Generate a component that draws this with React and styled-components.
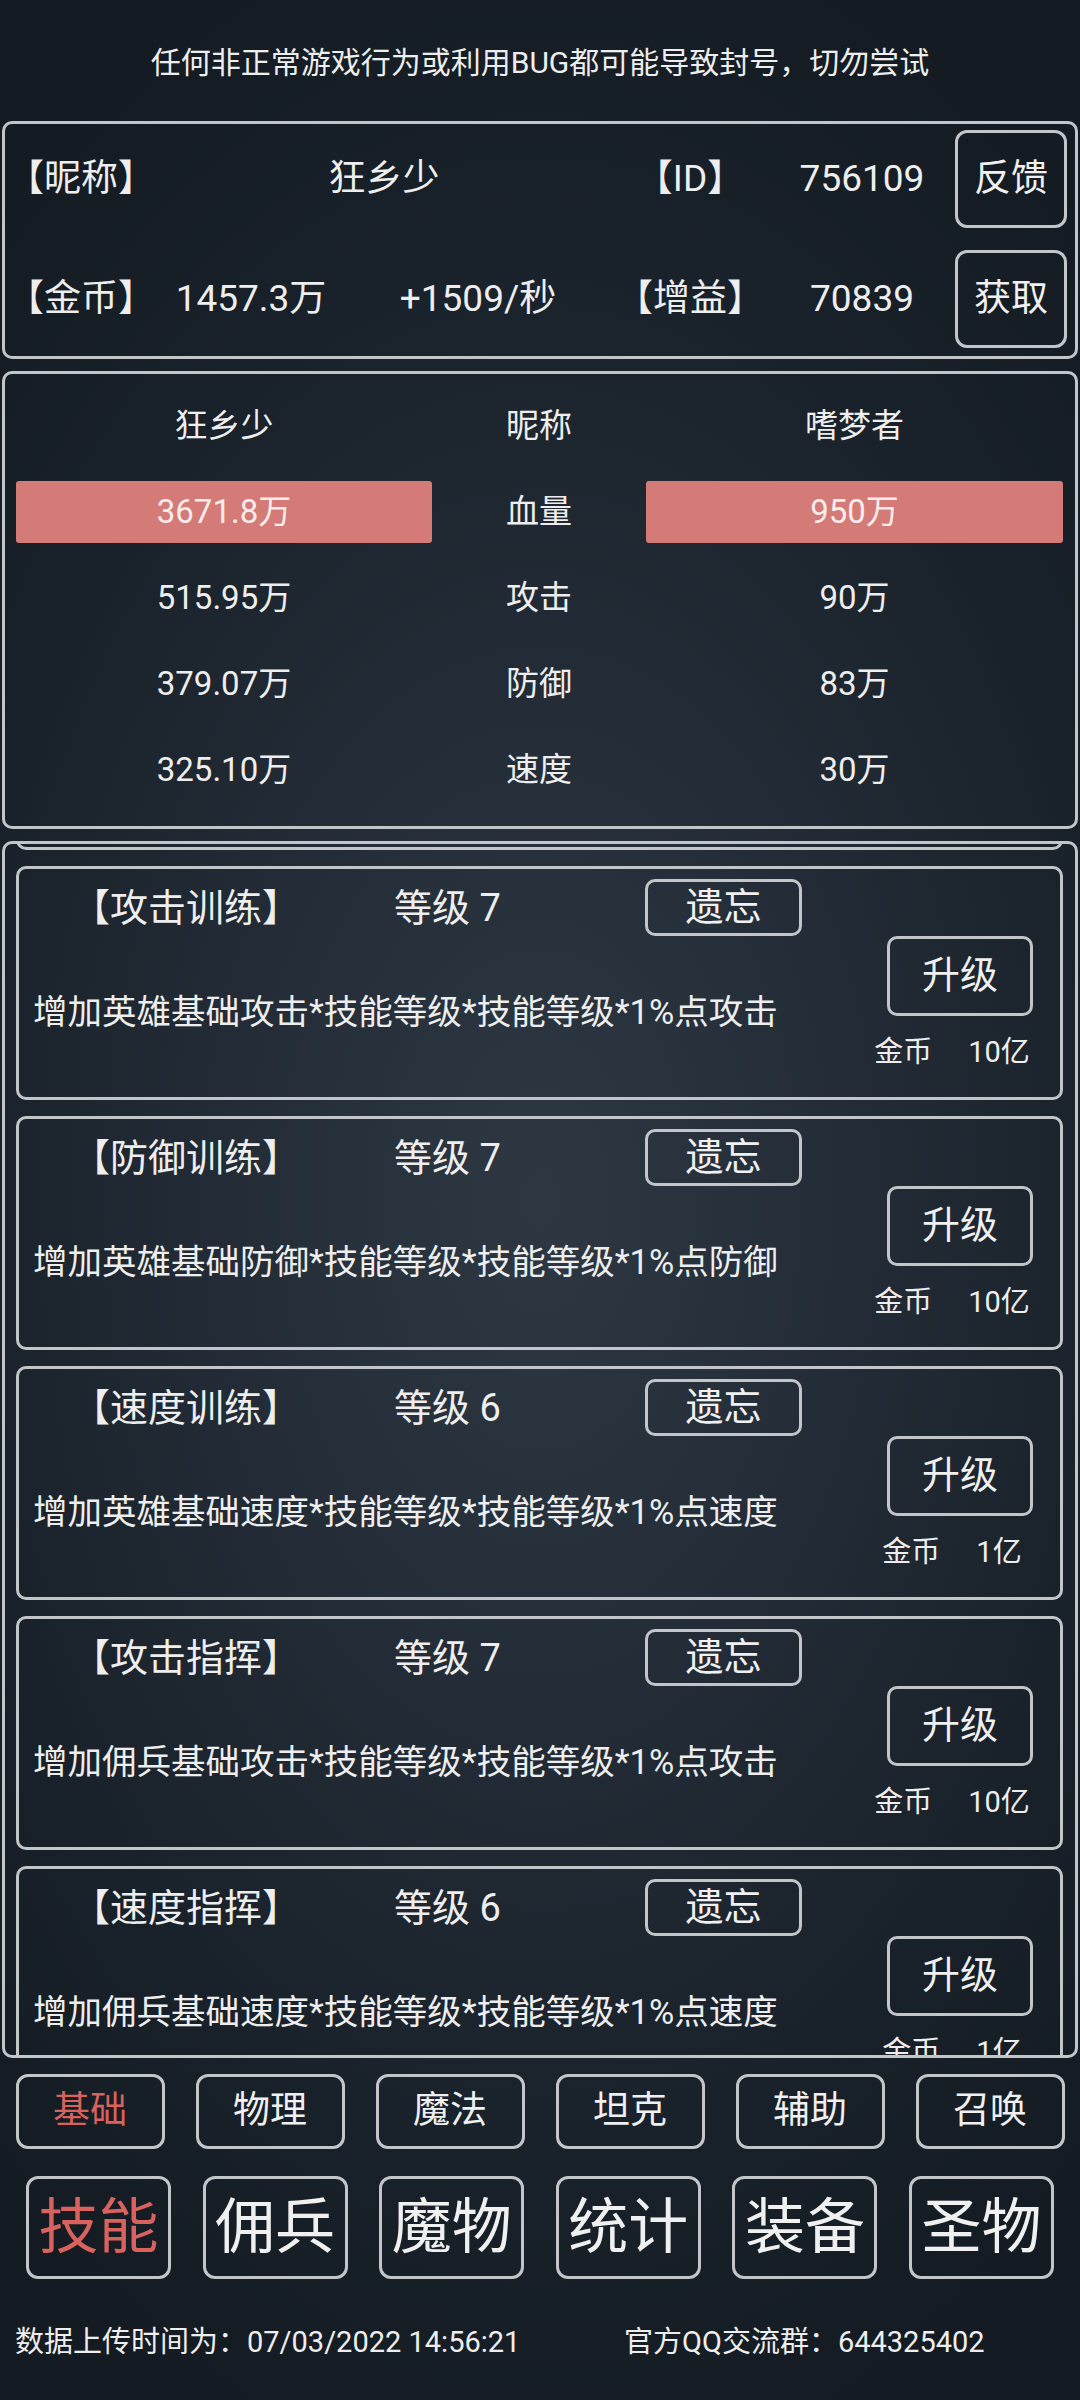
import React, { useLayoutEffect, useRef } from "react";
import styled, { createGlobalStyle } from "styled-components";

const GlobalStyle = createGlobalStyle`
  html, body {
    margin: 0;
    padding: 0;
  }
  body {
    width: 1080px;
    min-height: 2400px;
    background: radial-gradient(ellipse 75% 55% at 50% 50%, #2d3843 0%, #232c36 40%, #182029 75%, #141b22 100%);
    font-family: Roboto, "Noto Sans CJK SC", sans-serif;
    color: #eeeeee;
  }
  * {
    box-sizing: border-box;
  }
`;

const BORDER = "#c3c6c9";
const RED = "#d9625e";

const Page = styled.div`
  width: 1080px;
  height: 2400px;
  display: flex;
  flex-direction: column;
`;

const Notice = styled.div`
  height: 121px;
  display: flex;
  align-items: center;
  justify-content: center;
  font-size: 30px;
  padding-bottom: 2px;
`;

const Panel = styled.div`
  margin: ${(p) => p.$mt || 0}px 2px 0;
  border: 3px solid ${BORDER};
  border-radius: 10px;
`;

const InfoGrid = styled.div`
  display: grid;
  grid-template-columns: 152px 188px 266px 158px 186px 112px;
  row-gap: 22px;
  padding: 6px 6px 8px 0;
  font-size: 37px;
  line-height: 50px;
  align-items: center;
  justify-items: center;
`;

const Cell = styled.span`
  grid-column: ${(p) => p.$span || "auto"};
  white-space: nowrap;
`;

const BoxButton = styled.div`
  border: 3px solid ${BORDER};
  border-radius: ${(p) => p.$radius || 12}px;
  width: ${(p) => p.$w}px;
  height: ${(p) => p.$h}px;
  display: flex;
  align-items: center;
  justify-content: center;
  font-size: ${(p) => p.$size || 38}px;
  line-height: 1.2;
  color: ${(p) => (p.$active ? RED : "#f0f0f0")};
  white-space: nowrap;
  flex-shrink: 0;
`;

const StatsGrid = styled.div`
  display: grid;
  grid-template-columns: 416px 214px 417px;
  grid-auto-rows: 86px;
  padding: 9px 12px 13px 11px;
  font-size: 33px;
  line-height: 44px;
  align-items: center;
  justify-items: center;
`;

const StatCell = styled.div`
  width: 100%;
  height: 62px;
  display: flex;
  align-items: center;
  justify-content: center;
  border-radius: 3px;
  background: ${(p) => (p.$bar ? "#d47b78" : "transparent")};
  color: ${(p) => (p.$bar ? "#f7ecec" : "#eeeeee")};
`;

const Viewport = styled.div`
  height: 1211px;
  overflow-y: auto;
  scrollbar-width: none;
  padding: 0 12px 0 11px;
  &::-webkit-scrollbar {
    display: none;
  }
`;

const CardList = styled.div`
  display: flex;
  flex-direction: column;
  gap: 16px;
  padding-bottom: 16px;
`;

const Card = styled.div`
  height: 234px;
  flex-shrink: 0;
  border: 3px solid ${BORDER};
  border-radius: 10px;
  display: grid;
  grid-template-columns: 1fr 200px;
  grid-template-rows: 67px 1fr;
`;

const CardHead = styled.div`
  grid-column: 1 / 3;
  display: flex;
  align-items: center;
  padding: 10px 0 0 53px;
  font-size: 38px;
  line-height: 50px;
`;

const Title = styled.span`
  width: 322px;
  white-space: nowrap;
`;

const Level = styled.span`
  width: 251px;
  white-space: nowrap;
`;

const Desc = styled.div`
  padding: 54px 0 0 14px;
  font-size: 34.5px;
  line-height: 44px;
  white-space: nowrap;
`;

const Side = styled.div`
  display: flex;
  flex-direction: column;
  align-items: center;
`;

const Cost = styled.div`
  margin-top: 18px;
  line-height: 36px;
  font-size: 29px;
  display: flex;
  gap: 36px;
  padding-right: 16px;
  white-space: nowrap;
`;

const TabRow = styled.div`
  display: flex;
  justify-content: center;
  gap: ${(p) => p.$gap}px;
  margin-top: ${(p) => p.$mt}px;
`;

const Footer = styled.div`
  margin-top: 40px;
  height: 40px;
  display: flex;
  align-items: center;
  font-size: 29px;
  padding-left: 15px;
  white-space: nowrap;
`;

const FooterItem = styled.span`
  width: ${(p) => (p.$w ? p.$w + "px" : "auto")};
`;

// the first entry is scrolled out of view: only its bottom edge shows
const skills = [
  { name: "【攻击训练】", lv: 7, desc: "增加英雄基础攻击*技能等级*技能等级*1%点攻击", cost: "10亿" },
  { name: "【防御训练】", lv: 7, desc: "增加英雄基础防御*技能等级*技能等级*1%点防御", cost: "10亿" },
  { name: "【速度训练】", lv: 6, desc: "增加英雄基础速度*技能等级*技能等级*1%点速度", cost: "1亿" },
  { name: "【攻击指挥】", lv: 7, desc: "增加佣兵基础攻击*技能等级*技能等级*1%点攻击", cost: "10亿" },
  { name: "【速度指挥】", lv: 6, desc: "增加佣兵基础速度*技能等级*技能等级*1%点速度", cost: "1亿" },
];

const stats = [
  ["狂乡少", "昵称", "嗜梦者", false],
  ["3671.8万", "血量", "950万", true],
  ["515.95万", "攻击", "90万", false],
  ["379.07万", "防御", "83万", false],
  ["325.10万", "速度", "30万", false],
];

const smallTabs = ["基础", "物理", "魔法", "坦克", "辅助", "召唤"];
const bigTabs = ["技能", "佣兵", "魔物", "统计", "装备", "圣物"];

const SkillCard = ({ skill }) => (
	<Card>
		<CardHead>
			<Title>{skill.name}</Title>
			<Level>等级 {skill.lv}</Level>
			<BoxButton $w={157} $h={57} $radius={10}>遗忘</BoxButton>
		</CardHead>
		<Desc>{skill.desc}</Desc>
		<Side>
			<BoxButton $w={146} $h={80} $radius={10}>升级</BoxButton>
			<Cost>
				<span>金币</span>
				<span>{skill.cost}</span>
			</Cost>
		</Side>
	</Card>
);

const App = () => {
	const listRef = useRef(null);

	useLayoutEffect(() => {
		if (listRef.current) listRef.current.scrollTop = 228;
	}, []);

	return (
		<Page>
			<GlobalStyle />
			<Notice>任何非正常游戏行为或利用BUG都可能导致封号，切勿尝试</Notice>

			<Panel>
				<InfoGrid>
					<Cell>【昵称】</Cell>
					<Cell $span="2 / 4">狂乡少</Cell>
					<Cell>【ID】</Cell>
					<Cell>756109</Cell>
					<BoxButton $w={112} $h={98} $size={37}>反馈</BoxButton>

					<Cell>【金币】</Cell>
					<Cell>1457.3万</Cell>
					<Cell>+1509/秒</Cell>
					<Cell>【增益】</Cell>
					<Cell>70839</Cell>
					<BoxButton $w={112} $h={98} $size={37}>获取</BoxButton>
				</InfoGrid>
			</Panel>

			<Panel $mt={12}>
				<StatsGrid>
					{stats.map(([a, b, c, bar]) => (
						<React.Fragment key={b}>
							<StatCell $bar={bar}>{a}</StatCell>
							<StatCell>{b}</StatCell>
							<StatCell $bar={bar}>{c}</StatCell>
						</React.Fragment>
					))}
				</StatsGrid>
			</Panel>

			<Panel $mt={12}>
				<Viewport ref={listRef}>
					<CardList>
						<Card aria-hidden="true" />
						{skills.map((s) => (
							<SkillCard key={s.name} skill={s} />
						))}
					</CardList>
				</Viewport>
			</Panel>

			<TabRow $gap={31} $mt={16}>
				{smallTabs.map((t, i) => (
					<BoxButton key={t} $w={149} $h={75} $size={37} $active={i === 0}>
						{t}
					</BoxButton>
				))}
			</TabRow>

			<TabRow $gap={31.6} $mt={27}>
				{bigTabs.map((t, i) => (
					<BoxButton key={t} $w={145} $h={103} $size={60} $active={i === 0}>
						{t}
					</BoxButton>
				))}
			</TabRow>

			<Footer>
				<FooterItem $w={609}>数据上传时间为：07/03/2022 14:56:21</FooterItem>
				<FooterItem>官方QQ交流群：644325402</FooterItem>
			</Footer>
		</Page>
	);
};

export default App;
